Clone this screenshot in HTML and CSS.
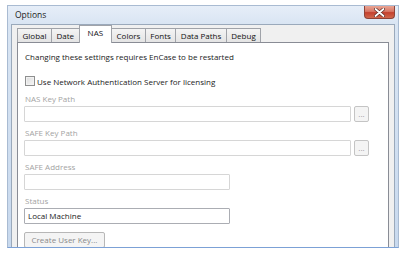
FILE: index.html
```html
<!DOCTYPE html>
<html lang="en">
<head>
  <meta charset="UTF-8">
  <title>Options</title>
  <link rel="stylesheet" href="styles.css">
</head>
<body>
  <div class="window">
    <div class="titlebar">
      <span class="title">Options</span>
      <div class="close">
        <svg width="11" height="9" viewBox="0 0 11 9">
          <path d="M1.5 1 L9.5 8 M9.5 1 L1.5 8" stroke="#5a2a24" stroke-width="3.2" stroke-linecap="round"/>
          <path d="M1.5 1 L9.5 8 M9.5 1 L1.5 8" stroke="#fff" stroke-width="1.8" stroke-linecap="round"/>
        </svg>
      </div>
    </div>
    <div class="client">
      <div class="tabs">
        <div class="tab">Global</div>
        <div class="tab">Date</div>
        <div class="tab active">NAS</div>
        <div class="tab">Colors</div>
        <div class="tab">Fonts</div>
        <div class="tab">Data Paths</div>
        <div class="tab">Debug</div>
      </div>
      <div class="panel">
        <p class="note">Changing these settings requires EnCase to be restarted</p>
        <label class="check"><span class="box"></span>Use Network Authentication Server for licensing</label>

        <div class="field">
          <div class="label">NAS Key Path</div>
          <div class="row">
            <div class="input long"></div>
            <div class="browse">...</div>
          </div>
        </div>
        <div class="field">
          <div class="label">SAFE Key Path</div>
          <div class="row">
            <div class="input long"></div>
            <div class="browse">...</div>
          </div>
        </div>
        <div class="field">
          <div class="label">SAFE Address</div>
          <div class="input short"></div>
        </div>
        <div class="field">
          <div class="label">Status</div>
          <div class="input short enabled">Local Machine</div>
        </div>
        <div class="btn">Create User Key...</div>
      </div>
    </div>
  </div>
</body>
</html>
```

FILE: styles.css
```css
body {
  margin: 0;
  background: #fff;
  font-family: "Open Sans", sans-serif;
  font-size: 8px;
  color: #1a1a1a;
}
.window {
  margin: 5px 0 0 7px;
  width: 392px;
  height: 243px;
  box-sizing: border-box;
  border: 1px solid #a9bbd2;
  border-bottom-color: #7ca1d6;
  padding: 0 3px;
  background: linear-gradient(#e6eef8, #d9e5f3 18px, #c8d9ee);
  display: flex;
  flex-direction: column;
  overflow: hidden;
}
.titlebar {
  height: 18px;
  display: flex;
  justify-content: space-between;
  align-items: flex-start;
}
.title {
  font-size: 8.5px;
  line-height: 18px;
  padding-left: 4px;
  color: #222;
}
.close {
  width: 31px;
  height: 13px;
  box-sizing: border-box;
  border: 1px solid #8d4338;
  border-top: none;
  border-radius: 0 0 4px 4px;
  background: linear-gradient(#e9a594, #d87766 45%, #c4412f 55%, #d0674c);
  display: flex;
  align-items: center;
  justify-content: center;
}
.client {
  flex: 1;
  background: #f0f0f0;
  border: 1px solid #9aa9bb;
  border-bottom: none;
  padding: 0 5px;
  display: flex;
  flex-direction: column;
}
.tabs {
  height: 17px;
  display: flex;
  align-items: flex-end;
}
.tab {
  height: 14px;
  box-sizing: border-box;
  padding: 0 4.5px;
  margin-right: -1px;
  border: 1px solid #a0a3a9;
  border-bottom: none;
  background: linear-gradient(#f4f4f4, #e4e4e4);
  line-height: 13px;
  color: #111;
}
.tab.active {
  height: 18px;
  margin-bottom: -1px;
  padding: 0 8px 3px;
  position: relative;
  z-index: 1;
  background: #fff;
  line-height: 14px;
}
.panel {
  flex: 1;
  background: #fff;
  border: 1px solid #898c95;
  border-bottom: none;
  padding: 7px 0 0 6px;
}
.note {
  margin: 0;
  line-height: 14px;
  padding-left: 1px;
}
.check {
  margin-top: 10px;
  height: 14px;
  display: flex;
  align-items: center;
  gap: 2px;
  padding-left: 1px;
}
.box {
  width: 10px;
  height: 10px;
  box-sizing: border-box;
  border: 1px solid #8e8f8f;
  background: linear-gradient(135deg, #dcdcdc, #f6f6f6);
  box-shadow: inset 0 0 0 1px #f2f2f2;
}
.field {
  margin-bottom: 4px;
}
.check + .field {
  margin-top: 4px;
}
.label {
  line-height: 14px;
  padding-left: 1px;
  color: #a3a3a3;
}
.row {
  display: flex;
  gap: 3px;
}
.input {
  height: 16px;
  box-sizing: border-box;
  border: 1px solid #d6d6d6;
  border-radius: 1px;
  background: #fff;
  padding-left: 3px;
  line-height: 14px;
}
.input.long {
  width: 327px;
}
.input.short {
  width: 206px;
}
.input.enabled {
  border-color: #abadb3;
}
.browse {
  width: 15px;
  height: 16px;
  box-sizing: border-box;
  border: 1px solid #c4c4c4;
  border-radius: 2px;
  background: #f4f4f4;
  color: #9a9a9a;
  text-align: center;
  line-height: 13px;
}
.btn {
  margin-top: 8px;
  width: 81px;
  height: 16px;
  box-sizing: border-box;
  border: 1px solid #b7b7b7;
  border-radius: 2px;
  background: #f4f4f4;
  color: #8a8a8a;
  text-align: center;
  line-height: 14px;
}
```
